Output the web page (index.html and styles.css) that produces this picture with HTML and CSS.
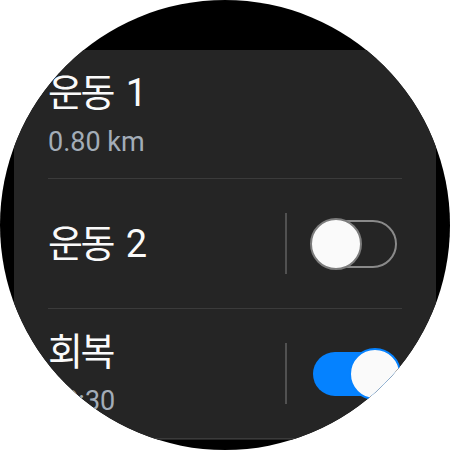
FILE: index.html
```html
<!DOCTYPE html>
<html>

   <head>
      <title>운동 설정</title>
      <meta charset="utf-8">
      <meta name="viewport" content="width=device-width, initial-scale=1.0">
      <link rel="stylesheet" href="styles.css">
   </head>

   <body>
      <div class="watch">
         <div class="watch-top"></div>

         <div class="list">
            <div class="item item-first">
               <div class="item-text">
                  <div class="item-title">운동 1</div>
                  <div class="item-sub">0.80 km</div>
               </div>
            </div>

            <div class="item">
               <div class="item-text">
                  <div class="item-title">운동 2</div>
               </div>
               <div class="item-switch">
                  <span class="sep"></span>
                  <span class="toggle"><span class="knob"></span></span>
               </div>
            </div>

            <div class="item">
               <div class="item-text">
                  <div class="item-title">회복</div>
                  <div class="item-sub">00:30</div>
               </div>
               <div class="item-switch">
                  <span class="sep"></span>
                  <span class="toggle toggle-on"><span class="knob"></span></span>
               </div>
            </div>
         </div>
      </div>
   </body>

</html>
```

FILE: styles.css
```css
body {
   margin: 0;
   background-color: #ffffff;
   font-family: Roboto, "Noto Sans CJK KR", sans-serif;
}

/* round watch screen */
.watch {
   width: 450px;
   height: 450px;
   border-radius: 50%;
   overflow: hidden;
   background-color: #000000;
   display: flex;
   flex-direction: column;
}

.watch-top {
   height: 50px;
   flex: none;
}

.list {
   margin: 0 14px;
   height: 390px;
   background-color: #252525;
   overflow: hidden;
}

.item {
   margin: 0 34px;
   height: 129px;
   border-bottom: 1px solid #3b3b3b;
   display: flex;
   align-items: center;
}

.item-first {
   height: 128px;
}

.item-text {
   flex: 1;
   white-space: nowrap;
}

.item-title {
   color: #fafafa;
   font-size: 38px;
   line-height: 44px;
   letter-spacing: -2.5px;
   word-spacing: 6px;
}

.item-sub {
   color: #a3adb8;
   font-size: 27px;
   line-height: 32px;
   margin-top: 11px;
}

.item-switch {
   display: flex;
   align-items: center;
   gap: 24px;
   margin-right: 5px;
}

.sep {
   width: 2px;
   height: 61px;
   background-color: #515151;
}

/* toggle switch */
.toggle {
   box-sizing: border-box;
   width: 86px;
   height: 48px;
   border: 2px solid #8a8a8a;
   border-radius: 24px;
   display: flex;
   align-items: center;
   justify-content: flex-start;
}

.knob {
   box-sizing: border-box;
   flex: none;
   width: 52px;
   height: 52px;
   margin-left: -3px;
   border-radius: 50%;
   background-color: #fafafa;
   border: 2px solid #7c7c7c;
}

.toggle-on {
   border-color: transparent;
   background-color: #0582ff;
   background-clip: padding-box;
   justify-content: flex-end;
}

.toggle-on .knob {
   margin-left: 0;
   margin-right: -6px;
   border-color: #0582ff;
}
```
